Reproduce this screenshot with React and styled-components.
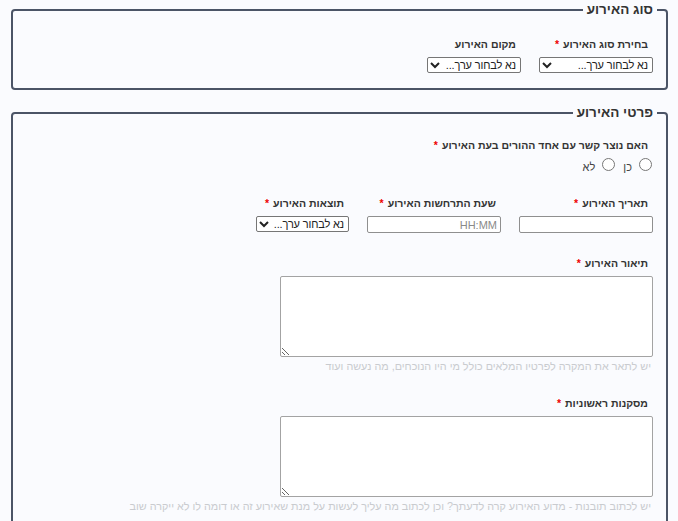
import React from 'react';
import styled, { createGlobalStyle } from 'styled-components';

const GlobalStyle = createGlobalStyle`
  body {
    margin: 0;
    background: #fafbfe;
    font-family: "Liberation Sans", Arial, sans-serif;
    direction: rtl;
  }
`;

const Page = styled.div`
  padding: 1px 10px 0 11px;
`;

const Fieldset = styled.fieldset`
  border: 2px solid #4b5466;
  border-radius: 4px;
  margin: 0 0 14px;
  padding: ${props => props.$top}px 13px 15px;
  min-width: 0;
`;

const Legend = styled.legend`
  font-size: 13.5px;
  font-weight: bold;
  line-height: 18px;
  color: #333;
  padding: 0 4px;
  margin-right: -4px;
`;

const Row = styled.div`
  display: flex;
  align-items: flex-start;
  gap: 18px;
`;

const Field = styled.div`
  margin-bottom: ${props => props.$space || 0}px;
`;

const Label = styled.label`
  display: block;
  font-size: 10.5px;
  font-weight: bold;
  line-height: 15px;
  color: #333;
  padding-right: 5px;
  margin-bottom: 5px;
  white-space: nowrap;
`;

const Req = styled.span`
  color: #e00;
  margin-right: 4px;
`;

const Select = styled.select`
  display: block;
  width: ${props => props.$width}px;
  height: 16px;
  box-sizing: border-box;
  font-family: "Liberation Sans", Arial, sans-serif;
  font-size: 11px;
  letter-spacing: -0.15px;
  color: #222;
  border: 1px solid #767676;
  border-radius: 2px;
  background: #fff;
  padding: 0;
`;

const TextInput = styled.input`
  display: block;
  width: 134px;
  height: 17px;
  box-sizing: border-box;
  font-family: "Liberation Sans", Arial, sans-serif;
  font-size: 11px;
  border: 1px solid #8f8f8f;
  border-radius: 2px;
  background: #fff;
  padding: 0 3px;
  &::placeholder {
    color: #8a8a8a;
  }
`;

const TextArea = styled.textarea`
  display: block;
  width: 373px;
  height: 81px;
  box-sizing: border-box;
  border: 1px solid #a3a3a3;
  border-radius: 2px;
  background: #fff;
  resize: vertical;
`;

const Help = styled.div`
  font-size: 10.8px;
  line-height: 14px;
  color: #c9cbcf;
  margin-top: 2px;
  padding-right: 2px;
  white-space: nowrap;
`;

const Radios = styled.div`
  display: flex;
  align-items: center;
  gap: 8px;
  font-size: 11px;
  color: #444;
  padding-right: 1px;
`;

const RadioOption = styled.label`
  display: flex;
  align-items: flex-start;
  gap: 7px;
  input {
    margin: 0;
    width: 13px;
    height: 13px;
  }
  span {
    position: relative;
    top: 3px;
  }
`;

const Placeholder = () => <option>נא לבחור ערך...</option>;

const Required = ({ children }) => (
  <Label>
    {children}
    <Req>*</Req>
  </Label>
);

const App = () => (
  <Page>
    <GlobalStyle />
    <Fieldset $top={18}>
      <Legend>סוג האירוע</Legend>
      <Row>
        <Field>
          <Required>בחירת סוג האירוע</Required>
          <Select $width={114}>
            <Placeholder />
          </Select>
        </Field>
        <Field>
          <Label>מקום האירוע</Label>
          <Select $width={94}>
            <Placeholder />
          </Select>
        </Field>
      </Row>
    </Fieldset>

    <Fieldset $top={16}>
      <Legend>פרטי האירוע</Legend>
      <Field $space={25}>
        <Required>האם נוצר קשר עם אחד ההורים בעת האירוע</Required>
        <Radios>
          <RadioOption>
            <input type="radio" name="contact" />
            <span>כן</span>
          </RadioOption>
          <RadioOption>
            <input type="radio" name="contact" />
            <span>לא</span>
          </RadioOption>
        </Radios>
      </Field>

      <Field $space={23}>
        <Row>
          <div>
            <Required>תאריך האירוע</Required>
            <TextInput type="text" />
          </div>
          <div>
            <Required>שעת התרחשות האירוע</Required>
            <TextInput type="text" placeholder="HH:MM" />
          </div>
          <div>
            <Required>תוצאות האירוע</Required>
            <Select $width={93}>
              <Placeholder />
            </Select>
          </div>
        </Row>
      </Field>

      <Field $space={23}>
        <Required>תיאור האירוע</Required>
        <TextArea />
        <Help>יש לתאר את המקרה לפרטיו המלאים כולל מי היו הנוכחים, מה נעשה ועוד</Help>
      </Field>

      <Field $space={23}>
        <Required>מסקנות ראשוניות</Required>
        <TextArea />
        <Help>
          יש לכתוב תובנות - מדוע האירוע קרה לדעתך? וכן לכתוב מה עליך לעשות על מנת שאירוע זה או דומה לו לא ייקרה שוב
        </Help>
      </Field>
    </Fieldset>
  </Page>
);

export default App;
